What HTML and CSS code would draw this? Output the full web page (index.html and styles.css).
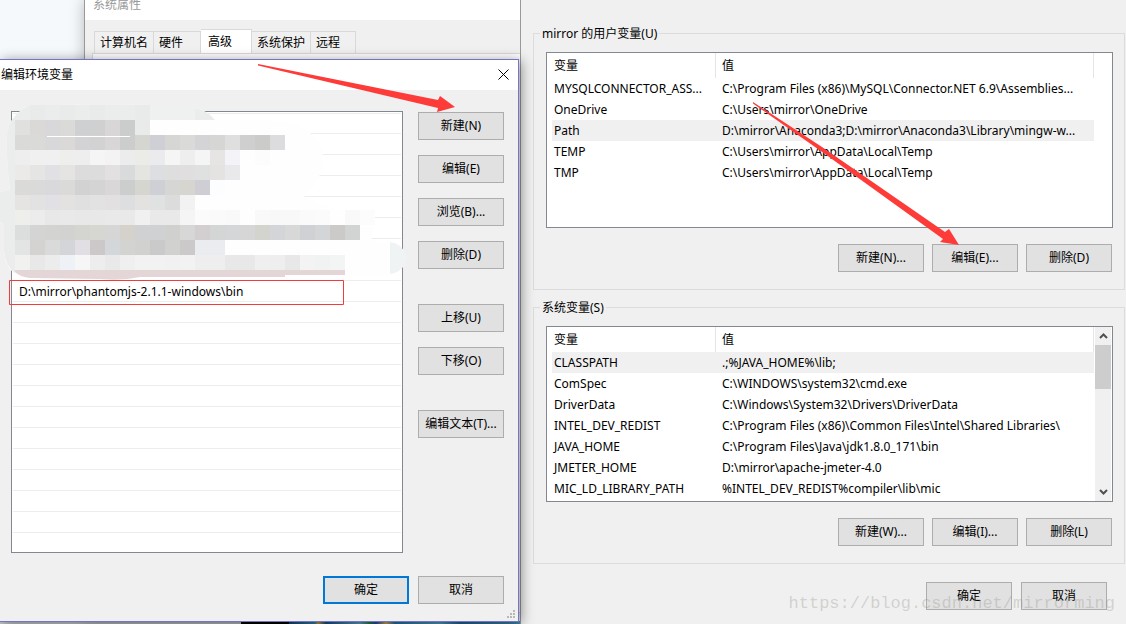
FILE: index.html
```html
<!DOCTYPE html>
<html lang="zh-CN">

<head>
    <meta charset="UTF-8">
    <meta name="viewport" content="width=device-width, initial-scale=1.0">
    <title>编辑环境变量</title>
    <link rel="stylesheet" href="styles.css">
</head>

<body>

    <!-- 系统属性 -->
    <section class="props-window">
        <header class="props-title">系统属性</header>
        <nav class="tabs">
            <button class="tab">计算机名</button>
            <button class="tab tab-hardware">硬件</button>
            <button class="tab active">高级</button>
            <button class="tab">系统保护</button>
            <button class="tab">远程</button>
        </nav>
        <div class="props-page"></div>
    </section>

    <!-- 编辑环境变量 -->
    <section class="edit-window">
        <header class="edit-title">
            <span>编辑环境变量</span>
            <button class="close" aria-label="关闭">
                <svg width="11" height="11" viewBox="0 0 11 11"><path d="M.5.5l10 10M10.5.5l-10 10" stroke="#000" fill="none"/></svg>
            </button>
        </header>

        <div class="edit-body">
            <ul class="path-list">
                <li></li>
                <li></li>
                <li></li>
                <li></li>
                <li></li>
                <li></li>
                <li></li>
                <li></li>
                <li>D:\mirror\phantomjs-2.1.1-windows\bin</li>
            </ul>
            <div class="side-buttons">
                <button class="btn">新建(N)</button>
                <button class="btn">编辑(E)</button>
                <button class="btn">浏览(B)...</button>
                <button class="btn">删除(D)</button>
                <button class="btn group-start">上移(U)</button>
                <button class="btn">下移(O)</button>
                <button class="btn group-start">编辑文本(T)...</button>
            </div>
        </div>

        <footer class="edit-footer">
            <button class="btn primary">确定</button>
            <button class="btn">取消</button>
        </footer>

        <svg class="grip" width="9" height="9" viewBox="0 0 9 9" fill="#b8b8b8">
            <path d="M6 0h2v2h-2zM3 3h2v2h-2zM6 3h2v2h-2zM0 6h2v2h-2zM3 6h2v2h-2zM6 6h2v2h-2z"/>
        </svg>
    </section>

    <!-- 环境变量 -->
    <main class="env-window">
        <fieldset class="group">
            <legend>mirror 的用户变量(U)</legend>
            <div class="list-box">
                <table>
                    <thead>
                        <tr><th class="col-name">变量</th><th>值</th></tr>
                    </thead>
                    <tbody>
                        <tr><td>MYSQLCONNECTOR_ASS...</td><td>C:\Program Files (x86)\MySQL\Connector.NET 6.9\Assemblies...</td></tr>
                        <tr><td>OneDrive</td><td>C:\Users\mirror\OneDrive</td></tr>
                        <tr class="selected"><td>Path</td><td>D:\mirror\Anaconda3;D:\mirror\Anaconda3\Library\mingw-w...</td></tr>
                        <tr><td>TEMP</td><td>C:\Users\mirror\AppData\Local\Temp</td></tr>
                        <tr><td>TMP</td><td>C:\Users\mirror\AppData\Local\Temp</td></tr>
                    </tbody>
                </table>
            </div>
            <div class="actions">
                <button class="btn">新建(N)...</button>
                <button class="btn">编辑(E)...</button>
                <button class="btn">删除(D)</button>
            </div>
        </fieldset>

        <fieldset class="group">
            <legend>系统变量(S)</legend>
            <div class="list-box">
                <table>
                    <thead>
                        <tr><th class="col-name">变量</th><th>值</th></tr>
                    </thead>
                    <tbody>
                        <tr class="selected"><td>CLASSPATH</td><td>.;%JAVA_HOME%\lib;</td></tr>
                        <tr><td>ComSpec</td><td>C:\WINDOWS\system32\cmd.exe</td></tr>
                        <tr><td>DriverData</td><td>C:\Windows\System32\Drivers\DriverData</td></tr>
                        <tr><td>INTEL_DEV_REDIST</td><td>C:\Program Files (x86)\Common Files\Intel\Shared Libraries\</td></tr>
                        <tr><td>JAVA_HOME</td><td>C:\Program Files\Java\jdk1.8.0_171\bin</td></tr>
                        <tr><td>JMETER_HOME</td><td>D:\mirror\apache-jmeter-4.0</td></tr>
                        <tr><td>MIC_LD_LIBRARY_PATH</td><td>%INTEL_DEV_REDIST%compiler\lib\mic</td></tr>
                    </tbody>
                </table>
                <div class="scrollbar">
                    <button aria-label="向上"><svg width="9" height="6" viewBox="0 0 9 6"><path d="M1 5l3.500-3.500L8 5" stroke="#505050" stroke-width="2" fill="none"/></svg></button>
                    <div class="thumb"></div>
                    <button aria-label="向下"><svg width="9" height="6" viewBox="0 0 9 6"><path d="M1 1l3.500 3.500L8 1" stroke="#505050" stroke-width="2" fill="none"/></svg></button>
                </div>
            </div>
            <div class="actions">
                <button class="btn">新建(W)...</button>
                <button class="btn">编辑(I)...</button>
                <button class="btn">删除(L)</button>
            </div>
        </fieldset>

        <div class="env-footer">
            <button class="btn">确定</button>
            <button class="btn">取消</button>
        </div>
    </main>

    <!-- 标注 -->
    <svg class="marks" width="1126" height="624" viewBox="0 0 1126 624">
        <path d="M9.500 280.500H343.500V304.500H9.500Z" fill="none" stroke="#f03c3c"/>
        <path d="M28 106Q90 103 150 105L190 107Q208 110 215 120L290 122Q326 135 323 165Q318 186 303 196Q330 210 364 214Q378 228 370 242L390 243V276H345L344 276H140Q120 281 100 279L20 278Q4 268 4 250V224L0 222V192L10 190Q6 160 7 135Q8 117 28 106Z" fill="#fefefe"/>
        <path d="M28 106Q90 103 150 105L190 107Q208 110 215 120H15V273Q5 266 4 250V224L0 222V192L10 190Q6 160 7 135Q8 117 28 106Z" fill="#ebecec"/>
        <path d="M390 242Q404 244 407 258Q404 272 390 274Z" fill="#f0f3f3"/>
        <path d="M15 270H345V275H285V277H140Q122 281 100 279L30 278Q20 277 15 272Z" fill="#e4d6d7"/>
        <g id="mosaic"></g>
        <path d="M47 136.500H130" stroke="#fff"/>
        <path d="M258 64L438 100L440 96L455 107L437 112L438 108L258 65.500Z" fill="#fd3b39"/>
        <path d="M753 102L822 147L945 232L949 229L959 245L940 242L943 239L825 154L753 103.500Z" fill="#fd3b39"/>
    </svg>
    <div class="watermark">https://blog.csdn.net/mirrorming</div>

    <script src="mosaic.js"></script>
</body>

</html>
```
FILE: styles.css
```css
* {
    box-sizing: border-box;
}

body {
    margin: 0;
    min-height: 100vh;
    display: grid;
    grid-template-columns: 520px minmax(560px, 1fr);
    position: relative;
    overflow: hidden;
    font-family: "Noto Sans", "Noto Sans CJK SC", sans-serif;
    font-size: 12px;
    line-height: 18px;
    color: #000;
    background: linear-gradient(90deg, #c8cacc 241px, #000 241px, #000 289px, #16487c 289px, #3c87ad 315px, #d0a63c 318px, #16558c 326px, #69a8c8 360px, #258548 370px, #2451b0 376px, #d9b25b 386px, #2878a8 395px, #5aa4c8 440px, #24689c 460px, #4690b4 519px) bottom / 100% 3px no-repeat, #f5f9fb;
}

button {
    font: inherit;
    color: inherit;
}

.btn {
    width: 86px;
    height: 28px;
    padding: 0;
    border: 1px solid #adadad;
    background-color: #e1e1e1;
    white-space: nowrap;
}

.btn.primary {
    border: 2px solid #0078d7;
}

/* 系统属性 */
.props-window {
    position: absolute;
    left: 84px;
    top: 0;
    width: 437px;
    bottom: 4px;
    border-left: 1px solid #999;
    background-color: #f0f0f0;
    box-shadow: 0 0 14px rgba(0, 0, 0, 0.25);
}

.props-title {
    height: 20px;
    padding-left: 8px;
    line-height: 10px;
    background-color: #fff;
    color: #999;
}

.tabs {
    display: flex;
    align-items: flex-end;
    height: 33px;
    padding-left: 9px;
}

.tab {
    height: 22px;
    padding: 0 5px;
    border: 1px solid #d9d9d9;
    border-bottom: none;
    border-left: none;
    background-color: #f0f0f0;
}

.tab:first-child {
    border-left: 1px solid #d9d9d9;
}

.tab-hardware {
    padding-right: 17px;
}

.tab:last-child {
    padding-right: 15px;
}

.tab.active {
    height: 24px;
    padding: 0 19px 0 7px;
    background-color: #fff;
}

.props-page {
    height: 560px;
    margin-left: 7px;
    border: 1px solid #d9d9d9;
    background-color: #fff;
}

/* 编辑环境变量 */
.edit-window {
    position: relative;
    z-index: 2;
    display: flex;
    flex-direction: column;
    margin: 59px 1px 2px 0;
    border: 1px solid #7474cc;
    border-left: none;
    background-color: #f0f0f0;
    box-shadow: 2px 2px 12px rgba(0, 0, 0, 0.45);
}

.edit-title {
    display: flex;
    align-items: center;
    justify-content: space-between;
    height: 30px;
    padding: 0 9px 1px 1px;
    background-color: #fff;
}

.close {
    display: flex;
    padding: 0;
    border: none;
    background: none;
}

.edit-body {
    display: flex;
    flex: 1;
    gap: 15px;
    padding: 21px 14px 0 11px;
}

.path-list {
    flex: 1;
    margin: 0;
    padding: 0 1px;
    list-style: none;
    border: 1px solid #828790;
    background: repeating-linear-gradient(#ededed 0, #ededed 1px, #fff 1px, #fff 21px) 0 21px content-box, #fff;
}

.path-list li {
    height: 21px;
    padding: 3px 6px 0;
}

.side-buttons {
    display: flex;
    flex-direction: column;
    gap: 15px;
    padding-top: 1px;
}

.side-buttons .group-start {
    margin-top: 20px;
}

.edit-footer {
    display: flex;
    justify-content: flex-end;
    gap: 9px;
    padding: 23px 14px 17px;
}

.grip {
    position: absolute;
    right: 2px;
    bottom: 2px;
}

/* 环境变量 */
.env-window {
    position: relative;
    z-index: 1;
    padding: 24px 1px 14px 12px;
    border-left: 1px solid #999;
    background-color: #f0f0f0;
}

.group {
    min-width: 0;
    margin: 0 0 8px;
    padding: 10px 11px 17px 12px;
    border: 1px solid #dcdcdc;
}

.group legend {
    height: 18px;
    margin-left: -6px;
    padding: 0 2px;
    line-height: 20px;
}

.list-box {
    display: flex;
    height: 176px;
    padding-left: 5px;
    border: 1px solid #828790;
    background-color: #fff;
}

table {
    flex: 1;
    align-self: flex-start;
    table-layout: fixed;
    border-collapse: separate;
    border-spacing: 0;
    margin-right: 18px;
}

th,
td {
    height: 21px;
    padding: 0 0 0 6px;
    font-weight: normal;
    text-align: left;
    white-space: nowrap;
}

th {
    height: 25px;
    border-right: 1px solid #e5e5e5;
}

th:first-child,
td:first-child {
    padding-left: 2px;
}

.col-name {
    width: 164px;
}

.selected td {
    background-color: #f0f0f0;
}

.list-box:has(.scrollbar) table {
    margin-right: 1px;
}

.scrollbar {
    display: flex;
    flex-direction: column;
    width: 17px;
    border-right: 1px solid #fff;
    background-color: #f0f0f0;
}

.scrollbar button {
    display: flex;
    align-items: center;
    justify-content: center;
    height: 18px;
    padding: 0;
    border: none;
    background: none;
}

.scrollbar .thumb {
    height: 44px;
    margin-bottom: auto;
    background-color: #cdcdcd;
}

.actions {
    display: flex;
    justify-content: flex-end;
    gap: 8px;
    margin-top: 16px;
    padding-right: 1px;
}

.env-footer {
    display: flex;
    justify-content: flex-end;
    gap: 9px;
    padding: 10px 18px 0 0;
}

/* 标注 */
.marks {
    position: absolute;
    left: 0;
    top: 0;
    z-index: 3;
    pointer-events: none;
}

.watermark {
    position: absolute;
    right: 11px;
    bottom: 10px;
    z-index: 3;
    font-family: "Liberation Mono", monospace;
    font-size: 17px;
    line-height: 20px;
    color: rgba(150, 150, 140, 0.35);
    pointer-events: none;
}
```
FILE: mosaic.js
```js
// 马赛克: 每格 15px, 从 (15, 105) 开始
const rows = [
    'eceeee e9eaea ebeded e9ebeb ebedec e9ebeb ebedec ebedec e9ebea eef1f0 eef1f0 eff1f1 eff1f1',
    'e0e0de dad9d7 d8d8da dadad8 cfd0d2 d0d0d0 d8d6d6 cbcdcd e9ebea',
    'dadad8 dadad8 d8d8da dad9d7 d3d3d5 d2d2d2 d8d6d6 cccece d6d6d1 cfd0d6 d6d6d4 dadad9 d4d4d6 d6d6d4 dfdfdf cfcfcf cbcbc9 dcdcde',
    'eeeeef f0f0f0 f0f0f0 eeeeed eeeeee f5f5f5 f3f3f3 ececec ebebe8 ebebee f5f5f5 eeeeee f5f5f5 e6e5e3 f4f4f8 fefefe fcfcfc',
    'ebeae8 e5e5e3 e1e1e5 e5e4e2 dcdcdc dcdcdc e2e0e1 d8dadc e4e5e1 dcdee1 dedede e0dede dfe1e1 e4e3e1 e9e9ec',
    'dadad8 dadada d9d9db dadad8 d2d2d2 d4d4d4 d9d7d7 cccecd d6d6d1 cfd0d6 d6d6d4 d7d5cf cfced5 fcfdff',
    'e5e4e2 e2e2e2 e1e1e5 e3e2e0 e0e0e0 e2e2e2 e2e0e1 dcdee0 e3e2e0 e0e2e1 dcdcdc f2f2f2',
    'eeeeeb ececec e8e8e8 e9e9e9 e8e8e8 e8e8e8 e9e9e9 e9e9e9 f0f0f0 e9e9e9 e9e9e9 f5f5f5 fbfbfb fafafa f9f9f9 fefefe f9f9f9 f8f8f8 f8f8f8 fafafa fbfbfb fefefe f9f9f9 fcfcfc',
    'dcdddd d4d4d4 d3d4d1 d2d3d0 d4d4d1 d6d7d1 d6d6d6 d5d1cb cfd1d3 cfd1d3 d0d0ce d7d7d7 d3cfd1 d4d6d5 d4d6d7 d6d6d6 d4d4ce d3d5d8 d8d8d8 cfd1d4 d4d5d7 cbcac8 d2d4d3',
    'e3e4e4 d4d3d1 dadada d3d5d9 e1dfe4 ccc8ca d4d7da d3d3d1 d1d1cf cacaca d1d1d0 ccc9cb ebecf0 ebecf0',
    'f1f1ef e8e8e8 ececec eef1f5 f6f6f6 ededed e9e9e9 efefef f2f2f2 f2f2f2 f1f1f1 f2f2f2 eeeeee eeeeee e8e8e8 e8e8e8 efefef eeeeee e8e8e8 f3f3f3 f1f3f3 f3f5f5'
];

const mosaic = document.getElementById('mosaic');

rows.forEach((row, y) => {
    row.split(' ').forEach((color, x) => {
        // 第一行两端留给圆角
        if (y === 0 && (x === 0 || x === 12)) return;
        const rect = document.createElementNS('http://www.w3.org/2000/svg', 'rect');
        rect.setAttribute('x', 15 + x * 15);
        rect.setAttribute('y', 105 + y * 15);
        rect.setAttribute('width', 15);
        rect.setAttribute('height', 15);
        rect.setAttribute('fill', '#' + color);
        mosaic.appendChild(rect);
    });
});
```
